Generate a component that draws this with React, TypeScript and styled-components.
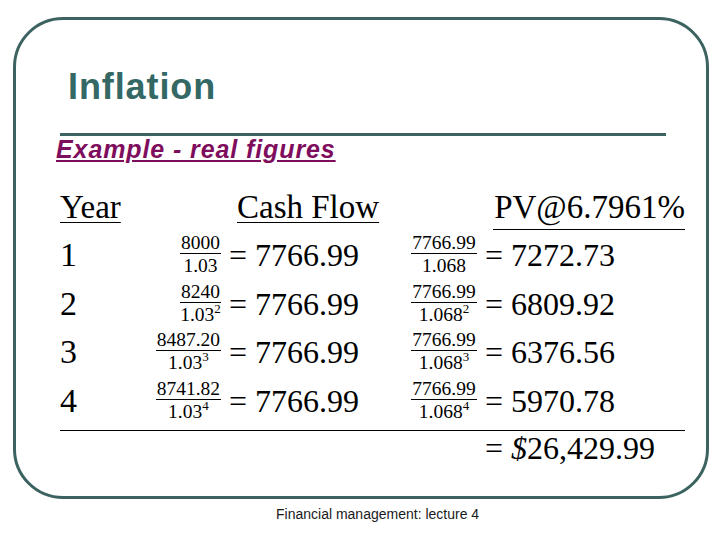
import React from "react";
import styled, { createGlobalStyle } from "styled-components";

const GlobalStyle = createGlobalStyle`
  html, body { margin: 0; padding: 0; background: #ffffff; }
  body { width: 720px; height: 540px; overflow: hidden; }
`;

const Slide = styled.div`
  width: 720px;
  height: 540px;
  box-sizing: border-box;
  padding: 17px 0 0 13px;
  display: flex;
  flex-direction: column;
  background: #ffffff;
`;

const Frame = styled.div`
  width: 696px;
  height: 482px;
  box-sizing: border-box;
  border: 3px solid #3d6360;
  border-radius: 50px;
  display: flex;
  flex-direction: column;
`;

const Title = styled.h1`
  margin: 49px 0 0 52px;
  font-family: "Liberation Sans", Arial, sans-serif;
  font-weight: 700;
  font-size: 36px;
  line-height: 36px;
  letter-spacing: 0.9px;
  color: #346865;
`;

const Rule = styled.div`
  margin: 28px 0 0 44px;
  width: 606px;
  height: 3px;
  background: #3d6360;
`;

const Subtitle = styled.h2`
  margin: 0 0 0 40px;
  font-family: "Liberation Sans", Arial, sans-serif;
  font-weight: 700;
  font-style: italic;
  font-size: 25px;
  line-height: 26px;
  letter-spacing: 0.9px;
  color: #7f0d5d;
  text-decoration: underline;
  text-decoration-thickness: 2px;
  text-underline-offset: 2px;
`;

const Table = styled.div`
  margin: 25px 0 0 44px;
  width: 625px;
  display: grid;
  grid-template-columns: 90px 250px 285px;
  grid-template-rows: 44px repeat(4, 48.5px) auto;
  font-family: "Liberation Serif", "Times New Roman", serif;
  color: #000000;
`;

const HeaderCell = styled.div<{ $pad?: number; $rule?: boolean; $under?: boolean }>`
  font-size: 33px;
  line-height: 40px;
  align-self: start;
  padding-left: ${(p) => p.$pad ?? 0}px;
  justify-self: ${(p) => (p.$rule ? "end" : "start")};
  ${(p) => (p.$under ? "text-decoration: underline; text-decoration-thickness: 1px; text-underline-offset: 4px;" : "")}
  ${(p) => (p.$rule ? "border-bottom: 1px solid #000; width: 192px; text-align: right; height: 42px;" : "")}
`;

const Label = styled.div`
  font-size: 34px;
  line-height: 48px;
  display: flex;
  align-items: center;
`;

const MathCell = styled.div<{ $pad?: number }>`
  display: flex;
  align-items: center;
  padding-left: ${(p) => p.$pad ?? 0}px;
`;

const FracSlot = styled.span<{ $width: number; $align: "flex-end" | "center" }>`
  width: ${(p) => p.$width}px;
  display: flex;
  justify-content: ${(p) => p.$align};
`;

const Fraction = styled.span`
  display: inline-flex;
  flex-direction: column;
  align-items: center;
  font-size: 19.5px;
  line-height: 17px;
  margin-top: -2px;
`;

const Num = styled.span`
  display: block;
  padding: 0 1px 2px;
  border-bottom: 1px solid #000;
  align-self: stretch;
  text-align: center;
`;

const Den = styled.span`
  display: block;
  padding-top: 3px;
`;

const Sup = styled.sup`
  font-size: 13px;
  line-height: 0;
  vertical-align: 8px;
`;

const Value = styled.span<{ $gap: number }>`
  font-size: 32px;
  line-height: 48px;
  margin-left: ${(p) => p.$gap}px;
  white-space: pre;
`;

const TotalRow = styled.div`
  grid-column: 1 / -1;
  margin-top: 5px;
  border-top: 1px solid #000;
  padding-left: 425px;
  font-size: 32px;
  line-height: 34px;
  white-space: pre;
`;

const Dollar = styled.span`
  font-style: italic;
`;

const Footer = styled.div`
  margin: 7px 0 0 263px;
  font-family: "Liberation Sans", Arial, sans-serif;
  font-size: 14px;
  line-height: 16px;
  color: #1a1a1a;
`;

type Row = {
  year: string;
  cfNum: string;
  cfExp?: string;
  pvExp?: string;
  pv: string;
};

const rows: Row[] = [
  { year: "1", cfNum: "8000", pv: "7272.73" },
  { year: "2", cfNum: "8240", cfExp: "2", pvExp: "2", pv: "6809.92" },
  { year: "3", cfNum: "8487.20", cfExp: "3", pvExp: "3", pv: "6376.56" },
  { year: "4", cfNum: "8741.82", cfExp: "4", pvExp: "4", pv: "5970.78" },
];

export default function App() {
  return (
    <>
      <GlobalStyle />
      <Slide>
        <Frame>
          <Title>Inflation</Title>
          <Rule />
          <Subtitle>Example - real figures</Subtitle>
          <Table>
            <HeaderCell $under>Year</HeaderCell>
            <HeaderCell $under $pad={87}>Cash Flow</HeaderCell>
            <HeaderCell $rule>PV@6.7961%</HeaderCell>
            {rows.map((r) => (
              <React.Fragment key={r.year}>
                <Label>{r.year}</Label>
                <MathCell>
                  <FracSlot $width={71} $align="flex-end">
                    <Fraction>
                      <Num>{r.cfNum}</Num>
                      <Den>
                        1.03{r.cfExp && <Sup>{r.cfExp}</Sup>}
                      </Den>
                    </Fraction>
                  </FracSlot>
                  <Value $gap={8}>{"= 7766.99"}</Value>
                </MathCell>
                <MathCell $pad={10}>
                  <FracSlot $width={68} $align="center">
                    <Fraction>
                      <Num>7766.99</Num>
                      <Den>
                        1.068{r.pvExp && <Sup>{r.pvExp}</Sup>}
                      </Den>
                    </Fraction>
                  </FracSlot>
                  <Value $gap={7}>{"= " + r.pv}</Value>
                </MathCell>
              </React.Fragment>
            ))}
            <TotalRow>
              {"= "}
              <Dollar>$</Dollar>
              {"26,429.99"}
            </TotalRow>
          </Table>
        </Frame>
        <Footer>Financial management: lecture 4</Footer>
      </Slide>
    </>
  );
}
